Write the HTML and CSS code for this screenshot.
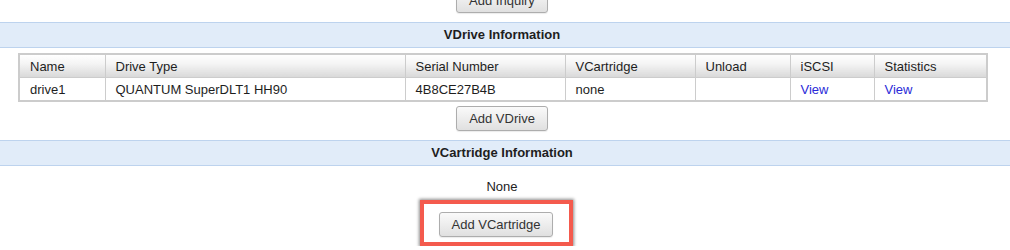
FILE: index.html
```html
<!DOCTYPE html>
<html>
<head>
<meta charset="utf-8">
<title>VDrive</title>
<link rel="stylesheet" href="styles.css">
</head>
<body>
<div class="page">
  <div class="actions actions-top">
    <button class="btn btn-cut">Add Inquiry</button>
  </div>

  <div class="section-head">VDrive Information</div>

  <table class="grid">
    <colgroup>
      <col class="c-name"><col class="c-type"><col class="c-serial"><col class="c-cart"><col class="c-unload"><col class="c-iscsi"><col class="c-stats">
    </colgroup>
    <thead>
      <tr>
        <th>Name</th><th>Drive Type</th><th>Serial Number</th><th>VCartridge</th><th>Unload</th><th>iSCSI</th><th>Statistics</th>
      </tr>
    </thead>
    <tbody>
      <tr>
        <td>drive1</td><td>QUANTUM SuperDLT1 HH90</td><td>4B8CE27B4B</td><td>none</td><td></td><td><a href="#">View</a></td><td><a href="#">View</a></td>
      </tr>
    </tbody>
  </table>

  <div class="actions actions-mid">
    <button class="btn">Add VDrive</button>
  </div>

  <div class="section-head section-head-2">VCartridge Information</div>

  <div class="empty">None</div>

  <div class="actions-bottom">
    <div class="highlight">
      <button class="btn btn-wide">Add VCartridge</button>
    </div>
  </div>
</div>
</body>
</html>
```

FILE: styles.css
```css
html, body {
  margin: 0;
  padding: 0;
  background: #ffffff;
}

body {
  font-family: "Liberation Sans", Arial, sans-serif;
  font-size: 13px;
  color: #222222;
  overflow: hidden;
}

.page {
  width: 1010px;
}

.actions {
  display: flex;
  justify-content: center;
  padding-right: 6px;
}

.actions-top {
  height: 13px;
}

.btn {
  font-family: "Liberation Sans", Arial, sans-serif;
  font-size: 13px;
  color: #333333;
  height: 25px;
  padding: 0 12px;
  border: 1px solid #adadad;
  border-radius: 3px;
  background: linear-gradient(#fafafa, #e0e0e0);
  box-shadow: 0 1px 1px rgba(0, 0, 0, 0.08);
  line-height: 23px;
  cursor: pointer;
}

.btn-wide {
  width: 114px;
  padding: 0;
}

.btn-cut {
  margin-top: -12px;
}

.section-head {
  margin-top: 9px;
  height: 24px;
  line-height: 24px;
  background: #e1ecf9;
  border-top: 1px solid #bdd3ee;
  border-bottom: 1px solid #bdd3ee;
  font-weight: bold;
  text-align: center;
  padding-right: 6px;
  color: #1e1e1e;
}

.grid {
  margin: 5px 0 0 18px;
  width: 968px;
  table-layout: fixed;
  border-collapse: collapse;
  border: 2px solid #cccccc;
}

.c-name { width: 86px; }
.c-type { width: 300px; }
.c-serial { width: 160px; }
.c-cart { width: 130px; }
.c-unload { width: 95px; }
.c-iscsi { width: 84px; }
.c-stats { width: 113px; }

.grid th,
.grid td {
  border: 1px solid #cccccc;
  padding: 0 0 0 10px;
  text-align: left;
  white-space: nowrap;
}

.grid th {
  height: 22px;
  font-weight: normal;
  color: #1e1e1e;
  background: linear-gradient(#ffffff 0%, #f4f4f4 40%, #d9d9d9 100%);
}

.grid td {
  height: 22px;
  color: #1e1e1e;
}

.grid a {
  color: #2a2ad8;
  text-decoration: none;
}

.actions-mid {
  margin-top: 4px;
}

.section-head-2 {
  margin-top: 9px;
}

.empty {
  margin-top: 13px;
  line-height: 15px;
  text-align: center;
  padding-right: 6px;
}

.actions-bottom {
  display: flex;
  margin-top: 6px;
  padding-left: 420px;
}

.highlight {
  display: flex;
  border: 4px solid #f45a4d;
  padding: 8px 16px 5px 15px;
  background: #ffffff;
  box-shadow: 0 0 3px 1px rgba(0, 0, 0, 0.45);
}
```
